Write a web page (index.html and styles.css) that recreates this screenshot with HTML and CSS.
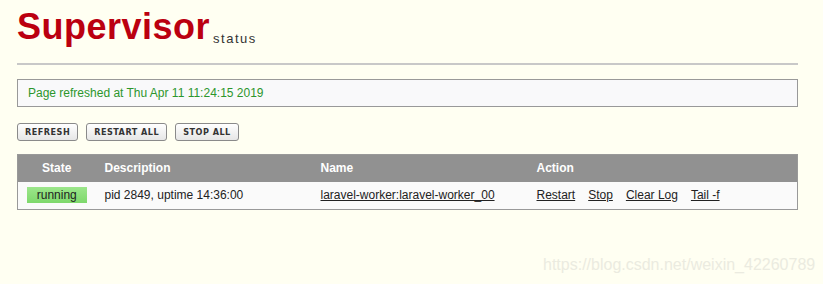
FILE: index.html
```html
<!DOCTYPE html>
<html lang="en">
<head>
  <meta charset="UTF-8">
  <title>Supervisor Status</title>
  <link rel="stylesheet" href="styles.css">
</head>
<body>
  <div class="wrapper">
    <div class="header">
      <h1 class="logo">Supervisor<span class="logo-sub">status</span></h1>
    </div>

    <div class="status-msg">Page refreshed at Thu Apr 11 11:24:15 2019</div>

    <div class="actions">
      <button class="btn">Refresh</button>
      <button class="btn">Restart All</button>
      <button class="btn">Stop All</button>
    </div>

    <table class="process-table">
      <colgroup>
        <col class="col-state">
        <col class="col-desc">
        <col class="col-name">
        <col>
      </colgroup>
      <thead>
        <tr>
          <th class="state">State</th>
          <th>Description</th>
          <th>Name</th>
          <th>Action</th>
        </tr>
      </thead>
      <tbody>
        <tr>
          <td class="state"><span class="badge running">running</span></td>
          <td>pid 2849, uptime 14:36:00</td>
          <td><a href="#">laravel-worker:laravel-worker_00</a></td>
          <td>
            <div class="links">
              <a href="#">Restart</a>
              <a href="#">Stop</a>
              <a href="#">Clear Log</a>
              <a href="#">Tail -f</a>
            </div>
          </td>
        </tr>
      </tbody>
    </table>
  </div>

  <div class="watermark">https://blog.csdn.net/weixin_42260789</div>
</body>
</html>
```

FILE: styles.css
```css
* {
  margin: 0;
  padding: 0;
  box-sizing: border-box;
}

body {
  background-color: #fffff2;
  font-family: 'Liberation Sans', Arial, sans-serif;
  font-size: 12px;
  color: #222;
}

.wrapper {
  width: 781px;
  margin-left: 17px;
  padding-top: 7px;
}

/* Logo */
.header {
  height: 58px;
  border-bottom: 2px solid #c8c8c8;
}

.logo {
  font-size: 36px;
  line-height: 40px;
  font-weight: bold;
  color: #bb0010;
  letter-spacing: 0.5px;
}

.logo-sub {
  font-size: 13px;
  font-weight: normal;
  color: #333;
  letter-spacing: 1.5px;
  margin-left: 3px;
  vertical-align: -4px;
}

/* Refresh message */
.status-msg {
  margin-top: 14px;
  height: 28px;
  line-height: 26px;
  padding-left: 10px;
  border: 1px solid #999;
  background-color: #f9f9fa;
  color: #2c962c;
}

/* Buttons */
.actions {
  display: flex;
  gap: 8px;
  margin-top: 16px;
}

.btn {
  height: 18px;
  padding: 0 7px;
  font-family: 'DejaVu Sans Condensed', 'DejaVu Sans', sans-serif;
  font-size: 9px;
  font-weight: bold;
  letter-spacing: 0.5px;
  text-transform: uppercase;
  color: #333;
  border: 1px solid #8a8a8a;
  border-radius: 3px;
  background: linear-gradient(#ffffff, #e6e6e6);
  cursor: pointer;
}

/* Process table */
.process-table {
  margin-top: 13px;
  width: 100%;
  table-layout: fixed;
  border-collapse: collapse;
  border: 1px solid #999;
}

.col-state {
  width: 78px;
}

.col-desc,
.col-name {
  width: 216px;
}

.process-table th {
  height: 27px;
  background-color: #919191;
  color: #fff;
  font-weight: bold;
  text-align: left;
  padding-left: 9px;
}

.process-table td {
  height: 28px;
  background-color: #fafafa;
  padding-left: 9px;
  white-space: nowrap;
}

.process-table .state {
  text-align: center;
  padding-left: 0;
}

.process-table a {
  color: #222;
  text-decoration: underline;
}

.badge {
  display: inline-block;
  width: 60px;
  height: 16px;
  line-height: 16px;
  text-align: center;
  color: #222;
  vertical-align: middle;
}

.badge.running {
  background: linear-gradient(#9ce68b, #7ed86c);
}

.links {
  display: flex;
  gap: 13px;
}

.watermark {
  position: absolute;
  left: 543px;
  top: 256px;
  font-size: 16px;
  color: #ebebe0;
}
```
